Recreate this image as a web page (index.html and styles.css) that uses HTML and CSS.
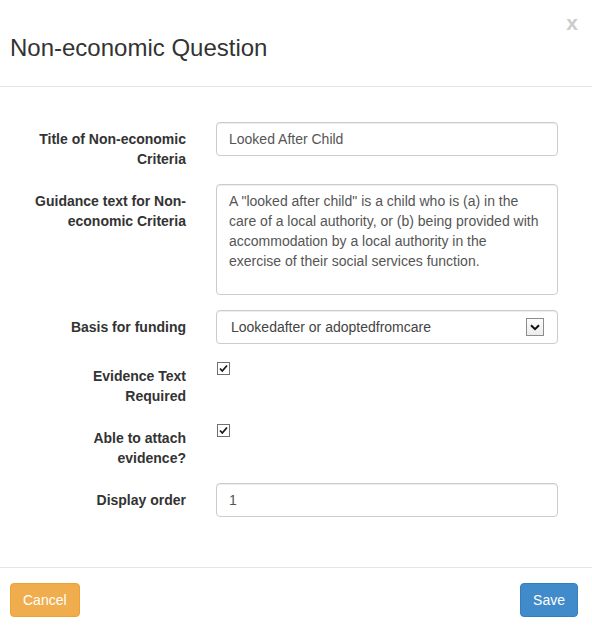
FILE: index.html
```html
<!DOCTYPE html>
<html lang="en">
<head>
<meta charset="utf-8">
<title>Non-economic Question</title>
<link rel="stylesheet" href="styles.css">
</head>
<body>
<div class="modal">
  <div class="modal-header">
    <h4 class="modal-title">Non-economic Question</h4>
    <button class="close" type="button">x</button>
  </div>
  <div class="modal-body">
    <div class="form-group">
      <label class="control-label">Title of Non-economic Criteria</label>
      <div class="field"><div class="form-control">Looked After Child</div></div>
    </div>
    <div class="form-group">
      <label class="control-label">Guidance text for Non-economic Criteria</label>
      <div class="field"><div class="form-control textarea">A "looked after child" is a child who is (a) in the care of a local authority, or (b) being provided with accommodation by a local authority in the exercise of their social services function.</div></div>
    </div>
    <div class="form-group">
      <label class="control-label">Basis for funding</label>
      <div class="field">
        <div class="form-control select">
          <span class="select-text">Lookedafter or adoptedfromcare</span>
          <span class="select-arrow">
            <svg width="10" height="7" viewBox="0 0 10 7"><path d="M1 1.2 L5 5.2 L9 1.2" fill="none" stroke="#111" stroke-width="2"/></svg>
          </span>
        </div>
      </div>
    </div>
    <div class="form-group">
      <label class="control-label">Evidence Text Required</label>
      <div class="field">
        <span class="checkbox">
          <svg width="13" height="13" viewBox="0 0 13 13"><rect x="0.5" y="0.5" width="12" height="12" fill="#fff" stroke="#707070"/><path d="M3 6.5 L5.3 9 L10 3.5" fill="none" stroke="#1a1a1a" stroke-width="1.8"/></svg>
        </span>
      </div>
    </div>
    <div class="form-group">
      <label class="control-label">Able to attach evidence?</label>
      <div class="field">
        <span class="checkbox">
          <svg width="13" height="13" viewBox="0 0 13 13"><rect x="0.5" y="0.5" width="12" height="12" fill="#fff" stroke="#707070"/><path d="M3 6.5 L5.3 9 L10 3.5" fill="none" stroke="#1a1a1a" stroke-width="1.8"/></svg>
        </span>
      </div>
    </div>
    <div class="form-group last">
      <label class="control-label">Display order</label>
      <div class="field"><div class="form-control">1</div></div>
    </div>
  </div>
  <div class="modal-footer">
    <button class="btn btn-warning" type="button">Cancel</button>
    <button class="btn btn-primary" type="button">Save</button>
  </div>
</div>
</body>
</html>
```

FILE: styles.css
```css
* { box-sizing: border-box; }
html, body {
  margin: 0;
  padding: 0;
  background: #fff;
}
body {
  font-family: "Liberation Sans", Arial, sans-serif;
  font-size: 14px;
  line-height: 20px;
  color: #333;
}
.modal {
  width: 592px;
}
.modal-header {
  display: flex;
  justify-content: space-between;
  align-items: flex-start;
  padding: 31px 14px 21px 10px;
  border-bottom: 1px solid #e5e5e5;
}
.modal-title {
  margin: 0;
  font-size: 24px;
  line-height: 34px;
  font-weight: normal;
  color: #333;
}
.close {
  margin-top: -19px;
  padding: 0;
  border: 0;
  background: transparent;
  font-family: "Liberation Sans", Arial, sans-serif;
  font-size: 21px;
  line-height: 21px;
  font-weight: bold;
  color: #cccccc;
}
.modal-body {
  padding: 35px 34px 50px 31px;
}
.form-group {
  display: grid;
  grid-template-columns: 155px 1fr;
  column-gap: 30px;
  margin-bottom: 15px;
}
.form-group.last { margin-bottom: 0; }
.control-label {
  padding-top: 7px;
  text-align: right;
  font-weight: bold;
  color: #333;
}
.form-control {
  height: 34px;
  padding: 6px 12px;
  border: 1px solid #ccc;
  border-radius: 4px;
  color: #555;
  background: #fff;
  box-shadow: inset 0 1px 1px rgba(0,0,0,0.075);
}
.textarea {
  height: 111px;
  padding: 6px 17px 6px 12px;
}
.select {
  display: flex;
  align-items: center;
  justify-content: space-between;
  padding: 6px 13px 6px 14px;
}
.select-text { color: #444; }
.select-arrow {
  display: flex;
  align-items: center;
  justify-content: center;
  width: 18px;
  height: 18px;
  border: 1px solid #8c8c8c;
  background: linear-gradient(#fdfdfd, #ececec);
}
.checkbox {
  display: block;
  width: 13px;
  height: 13px;
  margin: 3px 0 0 1px;
}
.checkbox svg { display: block; }
.modal-footer {
  display: flex;
  justify-content: space-between;
  padding: 15px 14px 15px 10px;
  border-top: 1px solid #e5e5e5;
}
.btn {
  height: 34px;
  padding: 6px 12px;
  border: 1px solid transparent;
  border-radius: 4px;
  font-family: "Liberation Sans", Arial, sans-serif;
  font-size: 14px;
  line-height: 20px;
  color: #fff;
}
.btn-warning {
  background: #f0ad4e;
  border-color: #eea236;
}
.btn-primary {
  background: #428bca;
  border-color: #357ebd;
}
```
